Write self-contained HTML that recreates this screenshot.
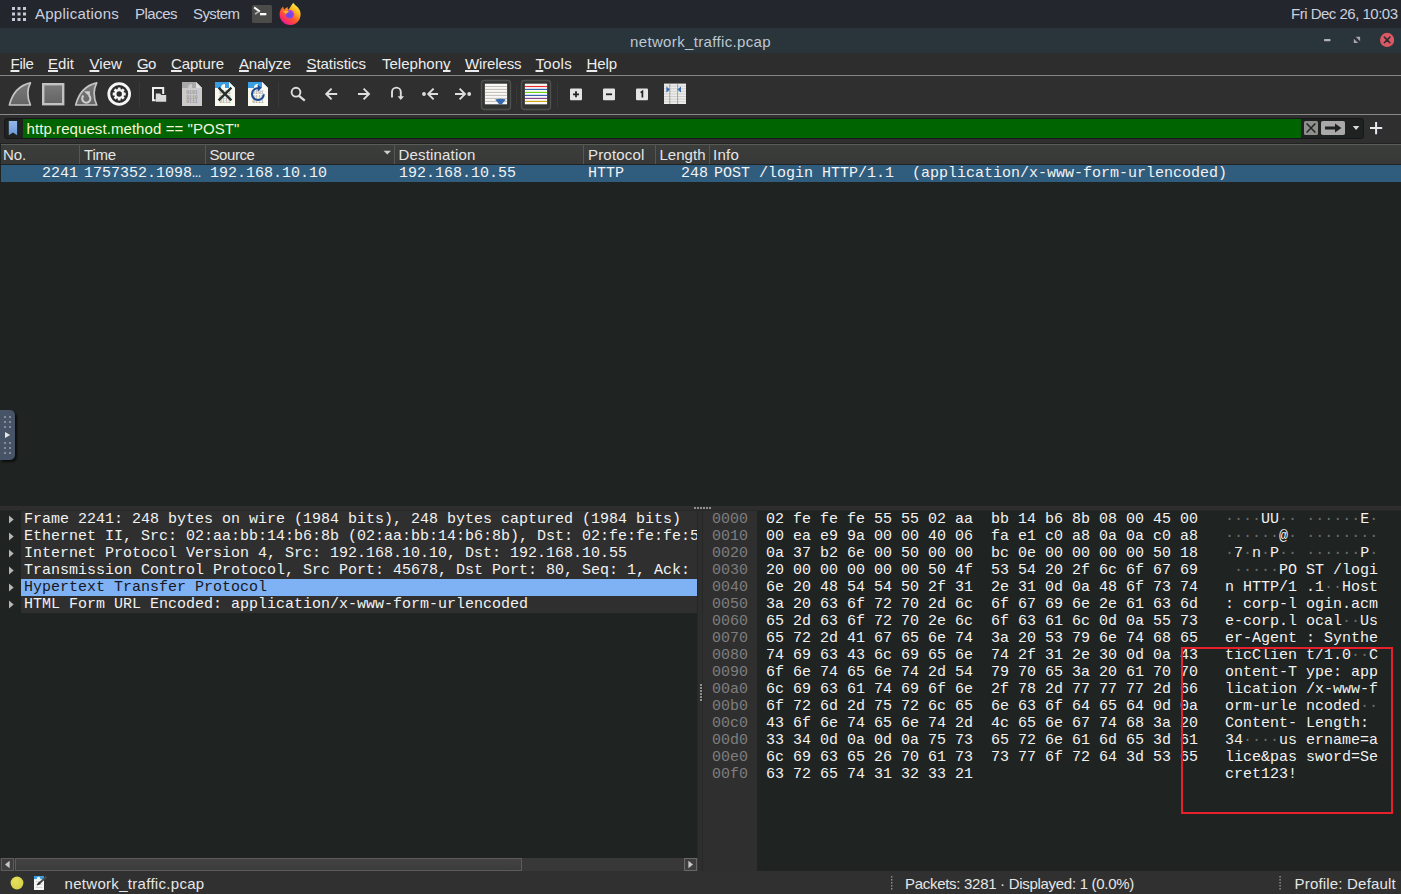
<!DOCTYPE html>
<html lang="en">
<head>
<meta charset="utf-8">
<title>network_traffic.pcap</title>
<style>
html,body{margin:0;padding:0;}
body{width:1401px;height:894px;overflow:hidden;position:relative;background:#2e2e2e;font-family:"Liberation Sans","DejaVu Sans",sans-serif;}
.a{position:absolute;}
.t{position:absolute;white-space:pre;line-height:17px;font-family:"Liberation Sans","DejaVu Sans",sans-serif;}
.t u{text-decoration:underline;text-decoration-skip-ink:none;text-decoration-thickness:1.5px;text-underline-offset:0.5px;}
.m{position:absolute;white-space:pre;font-family:"Liberation Mono","DejaVu Sans Mono",monospace;font-size:15px;line-height:17px;color:#f2f2f2;}
#panel{left:0;top:0;width:1401px;height:28px;background:#23272d;}
#title{left:0;top:28px;width:1401px;height:25px;background:#2a343b;}
#menubar{left:0;top:53px;width:1401px;height:22px;background:#2d2d2d;}
#menuline{left:0;top:75px;width:1401px;height:1px;background:#868686;}
#toolbar{left:0;top:76px;width:1401px;height:38px;background:#2f2f2f;}
#toolline{left:0;top:114px;width:1401px;height:1px;background:#8a8a8a;}
#filterarea{left:0;top:115px;width:1401px;height:29px;background:#2f2f2f;border-bottom:1px solid #202320;box-sizing:border-box;}
#fbox{left:4px;top:118px;width:1360px;height:21px;background:#1e2220;border-radius:4px;box-shadow:inset 0 0 0 1px #19161b;}
#fgreen{left:23px;top:119px;width:1278px;height:19px;background:#006400;}
#plist{left:0;top:144px;width:1401px;height:362px;background:#1f2321;}
#phead{left:1px;top:144px;width:1400px;height:20px;background:linear-gradient(#3c3e3c,#373837);border-top:1px solid #5a5c58;box-sizing:border-box;}
.hsep{position:absolute;top:144px;width:1px;height:20px;background:#565656;}
#prow{left:1px;top:165px;width:1400px;height:17px;background:#305c7e;}
#hsplit{left:0;top:506px;width:1401px;height:5px;background:#2e2e2e;border-bottom:1px solid #262826;box-sizing:border-box;}
#tree{left:0;top:511px;width:697px;height:347px;background:#1f2321;}
.tr{position:absolute;left:21px;width:676px;height:17px;background:#2f2f2f;}
.tr.sel{background:#7fb1f5;}
.tt{position:absolute;left:24px;white-space:pre;font-family:"Liberation Mono","DejaVu Sans Mono",monospace;font-size:15px;line-height:17px;color:#f2f2f2;}
.tt.sel{color:#16181c;}
.exp{position:absolute;left:8.7px;width:5px;height:9px;}
#vsplit{left:697px;top:511px;width:6px;height:360px;background:#2e2e2e;border-left:1px solid #252825;border-right:1px solid #252825;box-sizing:border-box;}
#hexpane{left:703px;top:511px;width:698px;height:360px;background:#1f2321;}
#offcol{left:703px;top:511px;width:54px;height:360px;background:#2f2f2f;}
#hex .hr{position:absolute;left:0;width:1401px;height:17px;font-family:"Liberation Mono","DejaVu Sans Mono",monospace;font-size:15px;line-height:17px;white-space:pre;color:#f2f2f2;}
#hex .off{position:absolute;left:712px;color:#7e7e7e;}
#hex .hx{position:absolute;left:766px;}
#hex .as{position:absolute;left:1225px;}
#hex .as i{font-style:normal;color:#6a6e6c;}
#hscroll{left:0;top:858px;width:698px;height:13px;background:#383838;}
#status{left:0;top:871px;width:1401px;height:23px;background:#303030;}
#redbox{left:1181px;top:647px;width:208px;height:163px;border:2px solid #e8202c;}
</style>
</head>
<body>
<div class="a" id="panel"></div>
<div class="a" id="title"></div>
<div class="a" id="menubar"></div>
<div class="a" id="menuline"></div>
<div class="a" id="toolbar"></div>
<div class="a" id="toolline"></div>
<div class="a" id="filterarea"></div>
<div class="a" id="fbox"></div>
<div class="a" id="fgreen"></div>
<div class="a" id="plist"></div>
<div class="a" id="phead"></div>
<div class="a" id="prow"></div>
<div class="a" id="hsplit"></div>
<div class="a" id="tree"></div>
<div class="a" id="vsplit"></div>
<div class="a" id="hexpane"></div>
<div class="a" id="offcol"></div>
<div class="a" id="hscroll"></div>
<div class="a" id="status"></div>

<span class="t" id="l_app" style="left:35px;top:5px;font-size:15px;color:#cbd0de;letter-spacing:0.259px;">Applications</span>
<span class="t" id="l_pla" style="left:135px;top:5px;font-size:15px;color:#cbd0de;letter-spacing:-0.505px;">Places</span>
<span class="t" id="l_sys" style="left:193px;top:5px;font-size:15px;color:#cbd0de;letter-spacing:-0.586px;">System</span>
<span class="t" id="l_clk" style="left:1291px;top:5px;font-size:15px;color:#cbd0de;letter-spacing:-0.504px;">Fri Dec 26, 10:03</span>
<span class="t" id="l_tit" style="left:630px;top:33px;font-size:15px;color:#bec8d2;letter-spacing:0.352px;">network_traffic.pcap</span>
<span class="t" id="m_file" style="left:10.5px;top:55px;font-size:15px;color:#ececec;letter-spacing:-0.297px;"><u>F</u>ile</span>
<span class="t" id="m_edit" style="left:48px;top:55px;font-size:15px;color:#ececec;letter-spacing:0.035px;"><u>E</u>dit</span>
<span class="t" id="m_view" style="left:89.5px;top:55px;font-size:15px;color:#ececec;letter-spacing:0.062px;"><u>V</u>iew</span>
<span class="t" id="m_go" style="left:137px;top:55px;font-size:15px;color:#ececec;letter-spacing:-0.758px;"><u>G</u>o</span>
<span class="t" id="m_cap" style="left:171px;top:55px;font-size:15px;color:#ececec;letter-spacing:-0.056px;"><u>C</u>apture</span>
<span class="t" id="m_ana" style="left:239px;top:55px;font-size:15px;color:#ececec;letter-spacing:-0.196px;"><u>A</u>nalyze</span>
<span class="t" id="m_sta" style="left:306.5px;top:55px;font-size:15px;color:#ececec;letter-spacing:-0.053px;"><u>S</u>tatistics</span>
<span class="t" id="m_tel" style="left:382px;top:55px;font-size:15px;color:#ececec;letter-spacing:0.012px;">Telephon<u>y</u></span>
<span class="t" id="m_wir" style="left:465px;top:55px;font-size:15px;color:#ececec;letter-spacing:-0.129px;"><u>W</u>ireless</span>
<span class="t" id="m_too" style="left:535.5px;top:55px;font-size:15px;color:#ececec;letter-spacing:0.294px;"><u>T</u>ools</span>
<span class="t" id="m_hel" style="left:586.5px;top:55px;font-size:15px;color:#ececec;letter-spacing:-0.094px;"><u>H</u>elp</span>
<span class="t" id="f_txt" style="left:26.5px;top:120px;font-size:15px;color:#f4f4dc;letter-spacing:0.077px;">http.request.method == "POST"</span>
<span class="t" id="h_no" style="left:3px;top:146px;font-size:15px;color:#e6e6e6;letter-spacing:-0.115px;">No.</span>
<span class="t" id="h_time" style="left:84px;top:146px;font-size:15px;color:#e6e6e6;letter-spacing:-0.195px;">Time</span>
<span class="t" id="h_src" style="left:209.5px;top:146px;font-size:15px;color:#e6e6e6;letter-spacing:-0.422px;">Source</span>
<span class="t" id="h_dst" style="left:398.5px;top:146px;font-size:15px;color:#e6e6e6;letter-spacing:0.178px;">Destination</span>
<span class="t" id="h_pro" style="left:588px;top:146px;font-size:15px;color:#e6e6e6;letter-spacing:0.184px;">Protocol</span>
<span class="t" id="h_len" style="left:659.5px;top:146px;font-size:15px;color:#e6e6e6;letter-spacing:0.018px;">Length</span>
<span class="t" id="h_inf" style="left:713px;top:146px;font-size:15px;color:#e6e6e6;letter-spacing:0.242px;">Info</span>
<span class="t" id="s_file" style="left:64.5px;top:875px;font-size:15px;color:#e6e6e6;letter-spacing:0.302px;">network_traffic.pcap</span>
<span class="t" id="s_pk" style="left:905px;top:875px;font-size:15px;color:#e6e6e6;letter-spacing:-0.294px;">Packets: 3281 · Displayed: 1 (0.0%)</span>
<span class="t" id="s_prof" style="left:1294.5px;top:875px;font-size:15px;color:#e6e6e6;letter-spacing:0.194px;">Profile: Default</span>
<!-- top panel icons -->
<svg class="a" style="left:0;top:0" width="320" height="28" viewBox="0 0 320 28">
  <defs>
    <linearGradient id="ffg" x1="0.85" y1="0.1" x2="0.25" y2="0.95">
      <stop offset="0" stop-color="#fff04a"/><stop offset="0.3" stop-color="#ffb01f"/><stop offset="0.6" stop-color="#ff5a2a"/><stop offset="0.85" stop-color="#ff2f62"/><stop offset="1" stop-color="#e8189a"/>
    </linearGradient>
    <radialGradient id="ffp" cx="0.4" cy="0.6" r="0.7">
      <stop offset="0" stop-color="#5b4be0"/><stop offset="0.7" stop-color="#9442ea"/><stop offset="1" stop-color="#c23fd8"/>
    </radialGradient>
  </defs>
  <g fill="#c6cad8">
    <rect x="12" y="7" width="3" height="3"/><rect x="17.5" y="7" width="3" height="3"/><rect x="23" y="7" width="3" height="3"/>
    <rect x="12" y="12.5" width="3" height="3"/><rect x="17.5" y="12.5" width="3" height="3"/><rect x="23" y="12.5" width="3" height="3"/>
    <rect x="12" y="18" width="3" height="3"/><rect x="17.5" y="18" width="3" height="3"/><rect x="23" y="18" width="3" height="3"/>
  </g>
  <rect x="252" y="5" width="20" height="18" rx="1.5" fill="#4b4c49"/>
  <path d="M255 8 L259 11" stroke="#fff" stroke-width="2" fill="none" stroke-linecap="square"/>
  <path d="M258.6 11.6 L255 14.2" stroke="#b4b4b4" stroke-width="1.6" fill="none"/>
  <rect x="260" y="13" width="6.3" height="2.3" fill="#fff"/>
  <!-- firefox -->
  <path d="M293.2 2.8 C295 6 299 7 300.2 11.5 C302 18 297.5 25 290.5 25 C284 25 279.6 20 279.6 14.5 C279.6 11 281 8.5 283.2 6.6 C283.2 8 283.6 9 284.4 9.6 C285.2 8.2 286.5 7.4 288 7.2 C287.4 8.2 287.6 9.2 288.4 9.8 C290 8 291.2 5.5 293.2 2.8 Z" fill="url(#ffg)"/>
  <circle cx="289.8" cy="14.3" r="4.3" fill="url(#ffp)"/>
  <path d="M282.6 11.6 C284.5 10.4 287.6 10.6 289.4 12 C287.8 12.2 286.6 13 285.8 14.6 C285.6 13.2 284.4 12 282.6 11.6 Z" fill="#ffb52a"/>
</svg>
<!-- title bar buttons -->
<svg class="a" style="left:1310px;top:28px" width="91" height="25" viewBox="0 0 91 25">
  <rect x="14" y="11" width="6.5" height="2.2" rx="0.6" fill="#b4adbb"/>
  <path d="M45.7 8.8 L50.1 8.8 L50.1 13.2 Z" fill="#aaa5b4"/>
  <path d="M43.8 10.7 L43.8 15 L48.2 15 Z" fill="#aaa5b4"/>
  <circle cx="77.1" cy="11.9" r="7.1" fill="#dc5862"/>
  <path d="M74.3 9.1 L79.9 14.7 M79.9 9.1 L74.3 14.7" stroke="#262c33" stroke-width="1.5" stroke-linecap="round"/>
</svg>
<!-- toolbar -->
<svg class="a" style="left:0;top:76px" width="1401" height="38" viewBox="0 0 1401 38">
  <defs>
    <linearGradient id="fing" x1="0" y1="0" x2="0" y2="1"><stop offset="0" stop-color="#7a7a7a"/><stop offset="1" stop-color="#646464"/></linearGradient>
  </defs>
  <!-- start -->
  <path d="M30.4 6.8 C20.5 9 12.5 16.5 9.4 29 L30.4 29 C27.6 22.5 26.4 14.5 30.4 6.8 Z" fill="url(#fing)" stroke="#c4c4c4" stroke-width="1.7" stroke-linejoin="round"/>
  <!-- stop -->
  <rect x="43.2" y="8.2" width="20" height="20" fill="url(#fing)" stroke="#c2c2c2" stroke-width="2.4"/>
  <!-- restart -->
  <g transform="translate(66.3 0)">
    <path d="M30.4 6.8 C20.5 9 12.5 16.5 9.4 29 L30.4 29 C27.6 22.5 26.4 14.5 30.4 6.8 Z" fill="url(#fing)" stroke="#c4c4c4" stroke-width="1.7" stroke-linejoin="round"/>
    <path d="M17.2 19.6 A4.1 4.1 0 1 0 22.6 19.4" fill="none" stroke="#cdcdcd" stroke-width="2.1"/>
    <path d="M17.6 15.2 L23.6 15.2 L23.6 21 Z" fill="#cdcdcd"/>
  </g>
  <!-- options gear -->
  <circle cx="119.2" cy="18" r="10.4" fill="#2b2b2b" stroke="#f6f6f6" stroke-width="2.8"/>
  <g fill="#f4f4f4" transform="translate(119.2 18)">
    <g>
      <rect x="-1.4" y="-6.5" width="2.8" height="13" rx="0.5"/>
      <rect x="-1.4" y="-6.5" width="2.8" height="13" rx="0.5" transform="rotate(45)"/>
      <rect x="-1.4" y="-6.5" width="2.8" height="13" rx="0.5" transform="rotate(90)"/>
      <rect x="-1.4" y="-6.5" width="2.8" height="13" rx="0.5" transform="rotate(135)"/>
    </g>
    <circle r="4.9"/>
    <circle r="2.7" fill="#2b2b2b"/>
  </g>
  <rect x="139" y="6" width="1" height="26" fill="#393939"/>
  <!-- open -->
  <path d="M155.6 24.2 L153 24.2 L153 12 L163.2 12 L163.2 18" fill="none" stroke="#efefef" stroke-width="2"/>
  <path d="M155.8 17.4 L160 17.4 L161.4 19 L166.2 19 L166.2 25.8 L155.8 25.8 Z" fill="#dadada"/>
  <!-- save (disabled) -->
  <g transform="translate(182 6)">
    <path d="M0 0 L14 0 L20 6 L20 24 L0 24 Z" fill="#cbcbcb"/>
    <path d="M0 0 L14 0 L20 6 L20 6 L0 6 Z" fill="#a9a9a9"/>
    <path d="M14 0 L20 6 L14 6 Z" fill="#dedede"/>
    <path d="M6 6 A4 4 0 0 1 10 2 L10 6 Z" fill="#cbcbcb"/>
    <g fill="#9b9b9b" font-family="Liberation Mono, monospace" font-weight="bold" font-size="4.8"><text x="4.2" y="12.2">0101</text><text x="4.2" y="16.6">0110</text><text x="4.2" y="21.2">0111</text></g>
  </g>
  <!-- close -->
  <g transform="translate(215 6)">
    <path d="M0 0 L14 0 L20 6 L20 24 L0 24 Z" fill="#fbfaf0"/>
    <path d="M0 0 L14 0 L20 6 L0 6 Z" fill="#3b9de2"/>
    <path d="M14 0 L20 6 L14 6 Z" fill="#fbfbf6"/>
    <path d="M6 6 A4 4 0 0 1 10 2 L10 6 Z" fill="#fbfaf0"/>
    <g fill="#a9a9a2" font-family="Liberation Mono, monospace" font-weight="bold" font-size="4.8"><text x="4.2" y="12.2">0101</text><text x="4.2" y="16.6">0110</text><text x="4.2" y="21.2">0111</text></g>
    <path d="M3.6 5.6 L16.4 18.4 M16.4 5.6 L3.6 18.4" stroke="#26302e" stroke-width="2.3"/>
  </g>
  <!-- reload -->
  <g transform="translate(248 6)">
    <path d="M0 0 L14 0 L20 6 L20 24 L0 24 Z" fill="#fbfaf0"/>
    <path d="M0 0 L14 0 L20 6 L0 6 Z" fill="#3b9de2"/>
    <path d="M14 0 L20 6 L14 6 Z" fill="#fbfbf6"/>
    <path d="M6 6 A4 4 0 0 1 10 2 L10 6 Z" fill="#fbfaf0"/>
    <g fill="#a9a9a2" font-family="Liberation Mono, monospace" font-weight="bold" font-size="4.8"><text x="4.2" y="12.2">0101</text><text x="4.2" y="16.6">0110</text><text x="4.2" y="21.2">0111</text></g>
    <path d="M15.8 12.2 A5.9 5.9 0 1 1 10.4 6.2" fill="none" stroke="#1c4a94" stroke-width="2"/>
    <path d="M9.6 2.8 L13.6 6 L9.8 9.4 Z" fill="#1c4a94"/>
  </g>
  <rect x="278" y="6" width="1" height="26" fill="#393939"/>
  <!-- nav icons -->
  <g fill="none" stroke="#dedede" stroke-width="1.9">
    <circle cx="296" cy="16.2" r="4.4"/>
    <path d="M299 19.8 L304.8 24.6" stroke-width="2.2"/>
    <path d="M337.2 18 L326.4 18 M331.6 12.6 L326.2 18 L331.6 23.4"/>
    <path d="M358 18 L368.8 18 M363.6 12.6 L369 18 L363.6 23.4"/>
    <path d="M392 21.6 L392 16 A4.4 4.4 0 0 1 400.8 16 L400.8 22"/>
    <path d="M438 18 L428.6 18 M433.6 12.6 L428.2 18 L433.6 23.4"/>
    <path d="M455 18 L464.8 18 M459.6 12.6 L465 18 L459.6 23.4"/>
  </g>
  <g fill="#dedede">
    <path d="M397.6 20.2 L404 20.2 L400.8 24 Z"/>
    <circle cx="424" cy="18" r="1.9"/>
    <circle cx="469.2" cy="18" r="1.9"/>
  </g>
  <!-- autoscroll (checked) -->
  <rect x="481.5" y="4.5" width="29" height="29" rx="3" fill="#333533" stroke="#4f514f" stroke-width="1.4"/>
  <rect x="484.9" y="5.7" width="22.2" height="20.6" fill="#f8f8f8" transform="translate(0 2)"/>
  <g stroke="#c2beb0" stroke-width="1">
    <path d="M484.9 10.5h22.2M484.9 13.4h22.2M484.9 16.4h22.2M484.9 19.4h22.2M484.9 22.4h22.2M484.9 25.4h22.2"/>
  </g>
  <path d="M495.2 23.4 Q500.5 22.2 505.8 23.4 L502 27.9 Q500.5 29.3 499 27.9 Z" fill="#3569b0"/>
  <rect x="516" y="9" width="1" height="20" fill="#383a38"/>
  <!-- colorize (checked) -->
  <rect x="521.5" y="4.5" width="29" height="29" rx="3" fill="#333533" stroke="#4f514f" stroke-width="1.4"/>
  <rect x="524.9" y="7.7" width="22.2" height="20.6" fill="#fafafa"/>
  <g stroke-width="1.15">
    <path d="M524.9 10.5h22.2" stroke="#ee2a2a"/>
    <path d="M524.9 13.4h22.2" stroke="#3465b0"/>
    <path d="M524.9 16.4h22.2" stroke="#6cd41c"/>
    <path d="M524.9 19.4h22.2" stroke="#3465b0"/>
    <path d="M524.9 22.4h22.2" stroke="#804a8a"/>
    <path d="M524.9 25.4h22.2" stroke="#d4a810"/>
  </g>
  <rect x="557" y="6" width="1" height="26" fill="#393939"/>
  <!-- zoom in / out / 1:1 -->
  <rect x="570" y="12.4" width="12" height="11.8" rx="1" fill="#e4e4e4"/>
  <path d="M573 18.3h6M576 15.3v6" stroke="#222" stroke-width="1.8"/>
  <rect x="603" y="12.4" width="12" height="11.8" rx="1" fill="#e4e4e4"/>
  <path d="M606 18.3h6" stroke="#222" stroke-width="1.8"/>
  <rect x="636" y="12.4" width="12" height="11.8" rx="1" fill="#e4e4e4"/>
  <path d="M640.6 16.6 L642.4 15.4 L642.4 21.6" stroke="#222" stroke-width="1.7" fill="none"/>
  <!-- resize columns -->
  <rect x="664" y="7.6" width="22" height="20.4" fill="#ededed"/>
  <g stroke="#cfcfca" stroke-width="1">
    <path d="M664 10.1h22M664 12.7h22M664 15.3h22M664 17.9h22M664 20.5h22M664 23.1h22M664 25.7h22"/>
  </g>
  <path d="M669.8 7.6v20.4M677.6 7.6v20.4" stroke="#9a9a96" stroke-width="0.9"/>
  <path d="M666.4 10.6 L670 13.6 L666.4 16.6 Z" fill="#3d6db5"/>
  <path d="M681 10.6 L677.4 13.6 L681 16.6 Z" fill="#3d6db5"/>
</svg>

<!-- header separators -->
<div class="hsep" style="left:79px"></div>
<div class="hsep" style="left:205px"></div>
<div class="hsep" style="left:394px"></div>
<div class="hsep" style="left:583px"></div>
<div class="hsep" style="left:655px"></div>
<div class="hsep" style="left:709px"></div>
<!-- packet row -->
<span class="m" style="left:42px;top:165px">2241</span>
<span class="m" style="left:84px;top:165px">1757352.1098…</span>
<span class="m" style="left:210px;top:165px">192.168.10.10</span>
<span class="m" style="left:399px;top:165px">192.168.10.55</span>
<span class="m" style="left:588px;top:165px">HTTP</span>
<span class="m" style="left:681px;top:165px">248</span>
<span class="m" style="left:714px;top:165px">POST /login HTTP/1.1  (application/x-www-form-urlencoded)</span>
<!-- tree -->
<div class="tr" style="top:511px"></div><svg class="exp" style="top:515px" viewBox="0 0 5 9"><path d="M0 0.5 L4.7 4.5 L0 8.5 Z" fill="#b6b6b6"/></svg><span class="tt" style="top:511px">Frame 2241: 248 bytes on wire (1984 bits), 248 bytes captured (1984 bits)</span>
<div class="tr" style="top:528px"></div><svg class="exp" style="top:532px" viewBox="0 0 5 9"><path d="M0 0.5 L4.7 4.5 L0 8.5 Z" fill="#b6b6b6"/></svg><span class="tt" style="top:528px;width:673px;overflow:hidden">Ethernet II, Src: 02:aa:bb:14:b6:8b (02:aa:bb:14:b6:8b), Dst: 02:fe:fe:fe:5</span>
<div class="tr" style="top:545px"></div><svg class="exp" style="top:549px" viewBox="0 0 5 9"><path d="M0 0.5 L4.7 4.5 L0 8.5 Z" fill="#b6b6b6"/></svg><span class="tt" style="top:545px">Internet Protocol Version 4, Src: 192.168.10.10, Dst: 192.168.10.55</span>
<div class="tr" style="top:562px"></div><svg class="exp" style="top:566px" viewBox="0 0 5 9"><path d="M0 0.5 L4.7 4.5 L0 8.5 Z" fill="#b6b6b6"/></svg><span class="tt" style="top:562px;width:673px;overflow:hidden">Transmission Control Protocol, Src Port: 45678, Dst Port: 80, Seq: 1, Ack:</span>
<div class="tr sel" style="top:579px"></div><svg class="exp" style="top:583px" viewBox="0 0 5 9"><path d="M0 0.5 L4.7 4.5 L0 8.5 Z" fill="#b6b6b6"/></svg><span class="tt sel" style="top:579px">Hypertext Transfer Protocol</span>
<div class="tr" style="top:596px"></div><svg class="exp" style="top:600px" viewBox="0 0 5 9"><path d="M0 0.5 L4.7 4.5 L0 8.5 Z" fill="#b6b6b6"/></svg><span class="tt" style="top:596px">HTML Form URL Encoded: application/x-www-form-urlencoded</span>

<!-- filter bar widgets -->
<svg class="a" style="left:0;top:115px" width="1401" height="29" viewBox="0 0 1401 29">
  <defs><linearGradient id="bmg" x1="0" y1="0" x2="0" y2="1"><stop offset="0" stop-color="#93b7ec"/><stop offset="1" stop-color="#6b98d8"/></linearGradient></defs>
  <path d="M8.8 6 L17.1 6 L17.1 20.2 L12.95 17.4 L8.8 20.2 Z" fill="url(#bmg)"/>
  <rect x="1304" y="6" width="14" height="14" rx="1.6" fill="#8f8f8c"/>
  <path d="M1306.6 8.4 L1315.4 17.6 M1315.4 8.4 L1306.6 17.6" stroke="#1e2220" stroke-width="1.4"/>
  <rect x="1321" y="6" width="24" height="14" rx="1.8" fill="#a9a9a9"/>
  <path d="M1325 11.6 L1335 11.6 L1335 8.6 L1341.4 13 L1335 17.4 L1335 14.4 L1325 14.4 Z" fill="#1e2220"/>
  <path d="M1352.8 11 L1359.4 11 L1356.1 15 Z" fill="#d9d9d9"/>
  <path d="M1370 13 L1382.2 13 M1376.1 7 L1376.1 19.2" stroke="#ece6ee" stroke-width="2"/>
</svg>
<!-- sort indicator -->
<svg class="a" style="left:383px;top:150px" width="9" height="6" viewBox="0 0 9 6"><path d="M0.6 0.8 L8 0.8 L4.3 4.6 Z" fill="#d0d0d0"/></svg>
<!-- left side handle -->
<div class="a" style="left:0;top:410px;width:15px;height:50px;background:#475467;border-radius:0 5px 5px 0;box-shadow:2px 2px 2px rgba(0,0,0,0.6);"></div>
<svg class="a" style="left:0;top:410px" width="15" height="50" viewBox="0 0 15 50">
  <g fill="#858b97">
    <rect x="4" y="6" width="2" height="2"/><rect x="9" y="6" width="2" height="2"/>
    <rect x="4" y="11" width="2" height="2"/><rect x="9" y="11" width="2" height="2"/>
    <rect x="4" y="16" width="2" height="2"/><rect x="9" y="16" width="2" height="2"/>
    <rect x="4" y="32" width="2" height="2"/><rect x="9" y="32" width="2" height="2"/>
    <rect x="4" y="37" width="2" height="2"/><rect x="9" y="37" width="2" height="2"/>
    <rect x="4" y="42" width="2" height="2"/><rect x="9" y="42" width="2" height="2"/>
  </g>
  <path d="M5 22 L10.2 25 L5 28 Z" fill="#e6e6e6"/>
</svg>
<!-- splitter handles -->
<svg class="a" style="left:693px;top:506px" width="20" height="5" viewBox="0 0 20 5"><g fill="#8e8e8e"><rect x="1" y="1" width="2" height="2"/><rect x="4" y="1" width="2" height="2"/><rect x="7" y="1" width="2" height="2"/><rect x="10" y="1" width="2" height="2"/><rect x="13" y="1" width="2" height="2"/><rect x="16" y="1" width="2" height="2"/></g></svg>
<svg class="a" style="left:698px;top:683px" width="5" height="20" viewBox="0 0 5 20"><g fill="#8e8e8e"><rect x="2" y="1" width="2" height="2"/><rect x="2" y="4" width="2" height="2"/><rect x="2" y="7" width="2" height="2"/><rect x="2" y="10" width="2" height="2"/><rect x="2" y="13" width="2" height="2"/><rect x="2" y="16" width="2" height="2"/></g></svg>
<!-- h scrollbar -->
<div class="a" style="left:1px;top:858px;width:13px;height:13px;background:#3e3e3e;box-shadow:inset 0 0 0 1px #5e5a5e;"></div>
<svg class="a" style="left:1px;top:858px" width="13" height="13" viewBox="0 0 13 13"><path d="M8.6 2.8 L8.6 10.2 L4 6.5 Z" fill="#c8c8c8"/></svg>
<div class="a" style="left:15px;top:858px;width:507px;height:13px;background:linear-gradient(#434343,#3a3c3a);box-shadow:inset 0 0 0 1px #605a60;"></div>
<div class="a" style="left:684px;top:858px;width:13px;height:13px;background:#3e3e3e;box-shadow:inset 0 0 0 1px #6a666a;"></div>
<svg class="a" style="left:684px;top:858px" width="13" height="13" viewBox="0 0 13 13"><path d="M4.4 2.8 L4.4 10.2 L9 6.5 Z" fill="#c8c8c8"/></svg>
<!-- status bar -->
<svg class="a" style="left:0;top:872px" width="1401" height="22" viewBox="0 0 1401 22">
  <defs><radialGradient id="yel" cx="0.4" cy="0.35" r="0.7"><stop offset="0" stop-color="#e6e25c"/><stop offset="1" stop-color="#d4d048"/></radialGradient></defs>
  <circle cx="17" cy="11" r="6.4" fill="url(#yel)"/>
  <rect x="34" y="4" width="10" height="14" fill="#f6f6f4"/>
  <rect x="34" y="4" width="10" height="3.1" fill="#3a9ee0"/>
  <path d="M36.6 7.1 A3 3 0 0 1 39.2 4.6 L40.4 7.1 Z" fill="#f6f6f4"/>
  <path d="M35.6 9.6h6.8M35.6 12.4h6.8M35.6 15.4h6.8" stroke="#c9ccd0" stroke-width="0.9"/>
  <path d="M46.5 4.7 L39 11.5" stroke="#4a4a4a" stroke-width="2.1"/>
  <path d="M39.9 10.7 L38.2 12.2" stroke="#2a2a2a" stroke-width="2.1"/>
  <path d="M38.9 12.8 L37.7 11.5 L36.8 13.6 Z" fill="#111"/>
  <g fill="#8c8c8c">
    <rect x="891" y="4" width="1.4" height="1.6"/><rect x="891" y="7" width="1.4" height="1.6"/><rect x="891" y="10" width="1.4" height="1.6"/><rect x="891" y="13" width="1.4" height="1.6"/><rect x="891" y="16" width="1.4" height="1.6"/>
    <rect x="1279.4" y="4" width="1.4" height="1.6"/><rect x="1279.4" y="7" width="1.4" height="1.6"/><rect x="1279.4" y="10" width="1.4" height="1.6"/><rect x="1279.4" y="13" width="1.4" height="1.6"/><rect x="1279.4" y="16" width="1.4" height="1.6"/>
  </g>
</svg>

<div id="hex">
<div class="hr" style="top:511px"><span class="off">0000</span><span class="hx">02 fe fe fe 55 55 02 aa  bb 14 b6 8b 08 00 45 00</span><span class="as"><i>·</i><i>·</i><i>·</i><i>·</i>UU<i>·</i><i>·</i> <i>·</i><i>·</i><i>·</i><i>·</i><i>·</i><i>·</i>E<i>·</i></span></div>
<div class="hr" style="top:528px"><span class="off">0010</span><span class="hx">00 ea e9 9a 00 00 40 06  fa e1 c0 a8 0a 0a c0 a8</span><span class="as"><i>·</i><i>·</i><i>·</i><i>·</i><i>·</i><i>·</i>@<i>·</i> <i>·</i><i>·</i><i>·</i><i>·</i><i>·</i><i>·</i><i>·</i><i>·</i></span></div>
<div class="hr" style="top:545px"><span class="off">0020</span><span class="hx">0a 37 b2 6e 00 50 00 00  bc 0e 00 00 00 00 50 18</span><span class="as"><i>·</i>7<i>·</i>n<i>·</i>P<i>·</i><i>·</i> <i>·</i><i>·</i><i>·</i><i>·</i><i>·</i><i>·</i>P<i>·</i></span></div>
<div class="hr" style="top:562px"><span class="off">0030</span><span class="hx">20 00 00 00 00 00 50 4f  53 54 20 2f 6c 6f 67 69</span><span class="as"> <i>·</i><i>·</i><i>·</i><i>·</i><i>·</i>PO ST /logi</span></div>
<div class="hr" style="top:579px"><span class="off">0040</span><span class="hx">6e 20 48 54 54 50 2f 31  2e 31 0d 0a 48 6f 73 74</span><span class="as">n HTTP/1 .1<i>·</i><i>·</i>Host</span></div>
<div class="hr" style="top:596px"><span class="off">0050</span><span class="hx">3a 20 63 6f 72 70 2d 6c  6f 67 69 6e 2e 61 63 6d</span><span class="as">: corp-l ogin.acm</span></div>
<div class="hr" style="top:613px"><span class="off">0060</span><span class="hx">65 2d 63 6f 72 70 2e 6c  6f 63 61 6c 0d 0a 55 73</span><span class="as">e-corp.l ocal<i>·</i><i>·</i>Us</span></div>
<div class="hr" style="top:630px"><span class="off">0070</span><span class="hx">65 72 2d 41 67 65 6e 74  3a 20 53 79 6e 74 68 65</span><span class="as">er-Agent : Synthe</span></div>
<div class="hr" style="top:647px"><span class="off">0080</span><span class="hx">74 69 63 43 6c 69 65 6e  74 2f 31 2e 30 0d 0a 43</span><span class="as">ticClien t/1.0<i>·</i><i>·</i>C</span></div>
<div class="hr" style="top:664px"><span class="off">0090</span><span class="hx">6f 6e 74 65 6e 74 2d 54  79 70 65 3a 20 61 70 70</span><span class="as">ontent-T ype: app</span></div>
<div class="hr" style="top:681px"><span class="off">00a0</span><span class="hx">6c 69 63 61 74 69 6f 6e  2f 78 2d 77 77 77 2d 66</span><span class="as">lication /x-www-f</span></div>
<div class="hr" style="top:698px"><span class="off">00b0</span><span class="hx">6f 72 6d 2d 75 72 6c 65  6e 63 6f 64 65 64 0d 0a</span><span class="as">orm-urle ncoded<i>·</i><i>·</i></span></div>
<div class="hr" style="top:715px"><span class="off">00c0</span><span class="hx">43 6f 6e 74 65 6e 74 2d  4c 65 6e 67 74 68 3a 20</span><span class="as">Content- Length: </span></div>
<div class="hr" style="top:732px"><span class="off">00d0</span><span class="hx">33 34 0d 0a 0d 0a 75 73  65 72 6e 61 6d 65 3d 61</span><span class="as">34<i>·</i><i>·</i><i>·</i><i>·</i>us ername=a</span></div>
<div class="hr" style="top:749px"><span class="off">00e0</span><span class="hx">6c 69 63 65 26 70 61 73  73 77 6f 72 64 3d 53 65</span><span class="as">lice&amp;pas sword=Se</span></div>
<div class="hr" style="top:766px"><span class="off">00f0</span><span class="hx">63 72 65 74 31 32 33 21</span><span class="as">cret123!</span></div>
</div>
<div class="a" id="redbox"></div>
</body>
</html>
